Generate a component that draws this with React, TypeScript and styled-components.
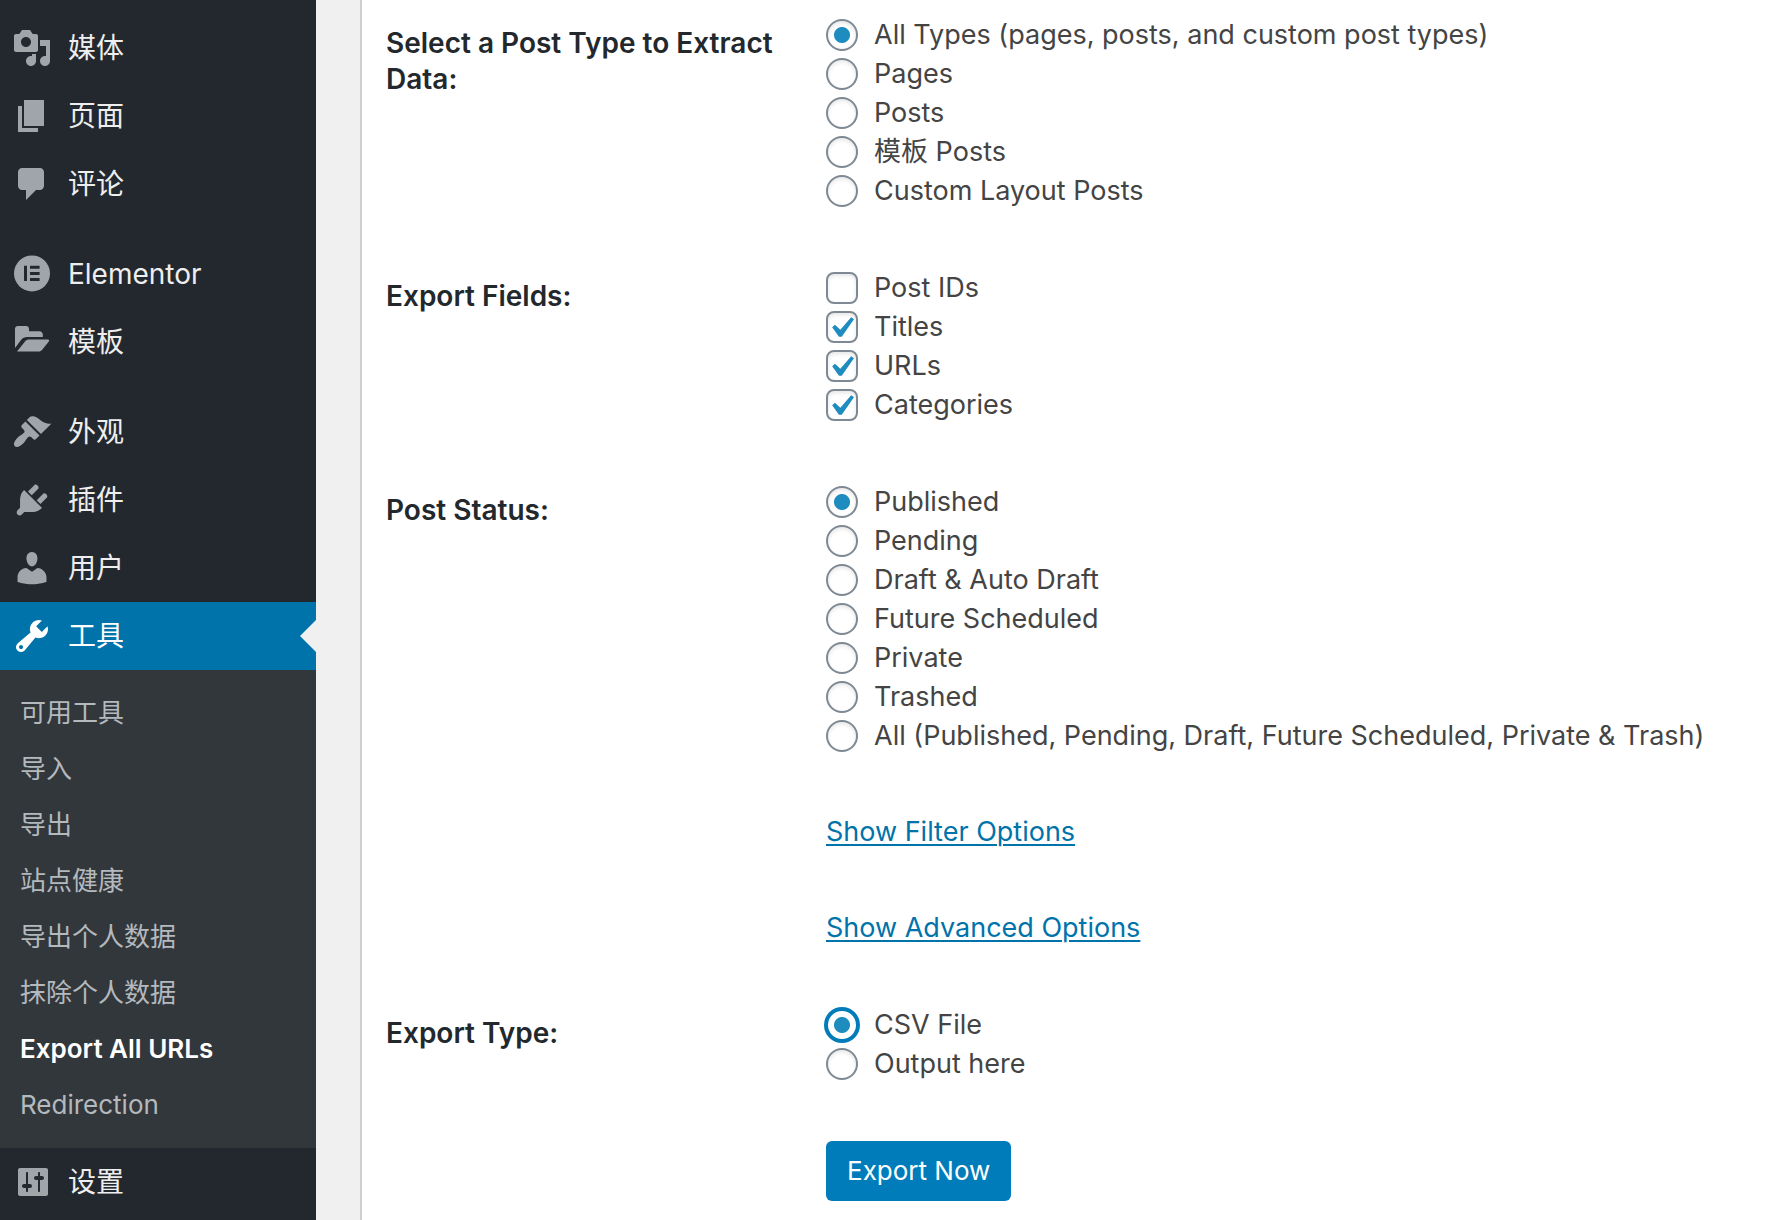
import React, { ReactNode, useState } from "react";
import styled, { createGlobalStyle, css } from "styled-components";

const GlobalStyle = createGlobalStyle`
  * { box-sizing: border-box; }
  html, body, #root { min-height: 100vh; }
  body {
    margin: 0;
    background: #f0f0f0;
    color: #444;
    font-family: Inter, "Noto Sans CJK SC", sans-serif;
    font-size: 27px;
    line-height: 36px;
  }
`;

const Page = styled.div`
  display: flex;
  min-height: 100vh;
`;

const Sidebar = styled.nav`
  flex: none;
  width: 316px;
  padding-top: 14px;
  background: #23282e;
`;

const MenuList = styled.ul`
  margin: 0;
  padding: 0;
  list-style: none;
`;

const MenuItem = styled.li<{ $spaced?: boolean }>`
  margin-top: ${(p) => (p.$spaced ? "22px" : "0")};
`;

const MenuLink = styled.a<{ $current?: boolean }>`
  position: relative;
  display: flex;
  align-items: center;
  gap: 16px;
  height: 68px;
  padding-left: 12px;
  color: #eee;
  font-size: 28px;
  text-decoration: none;

  svg {
    flex: none;
    width: 40px;
    height: 40px;
    fill: #a0a5aa;
  }

  ${(p) =>
    p.$current &&
    css`
      background: #0073aa;
      color: #fff;

      svg {
        fill: #fff;
      }

      &::after {
        content: "";
        position: absolute;
        top: 50%;
        right: 0;
        margin-top: -16px;
        border: 16px solid transparent;
        border-left-width: 0;
        border-right-color: #f0f0f0;
      }
    `}
`;

const Submenu = styled.ul`
  margin: 0;
  padding: 15px 0;
  list-style: none;
  background: #32373c;
`;

const SubmenuLink = styled.a<{ $current?: boolean }>`
  display: flex;
  align-items: center;
  height: 56px;
  padding-left: 20px;
  color: ${(p) => (p.$current ? "#fff" : "#b4b9be")};
  font-size: 26px;
  font-weight: ${(p) => (p.$current ? 600 : 400)};
  text-decoration: none;
`;

const Main = styled.main`
  flex: 1;
  min-width: 0;
  margin-left: 44px;
  padding: 15px 24px 17px;
  border-left: 2px solid #ccd0d4;
  background: #fff;
`;

const Form = styled.form`
  display: flex;
  flex-direction: column;
  gap: 58px;
`;

const Row = styled.div`
  display: grid;
  grid-template-columns: 400px 1fr;
  column-gap: 40px;
  align-items: start;
`;

const RowTitle = styled.h2`
  margin: 0;
  padding-top: 10px;
  color: #23282d;
  font-size: 28px;
  font-weight: 600;
  line-height: 36px;
`;

const RowBody = styled.div`
  grid-column: 2;
`;

const Option = styled.label`
  display: flex;
  align-items: center;
  gap: 16px;
  height: 39px;
  white-space: nowrap;
`;

const Control = styled.input`
  appearance: none;
  flex: none;
  width: 32px;
  height: 32px;
  margin: 0;
  border: 2px solid #7e8993;
  background-color: #fff;
  background-repeat: no-repeat;
  box-shadow: inset 0 2px 4px rgba(0, 0, 0, 0.1);
  outline: none;
`;

const Radio = styled(Control).attrs({ type: "radio" })<{ $active?: boolean }>`
  border-radius: 50%;

  &:checked {
    background-image: radial-gradient(circle, #1e8cbe 7.5px, transparent 8.5px);
  }

  ${(p) =>
    p.$active &&
    css`
      border-color: #007cba;
      box-shadow: 0 0 0 2px #007cba;
    `}
`;

const checkMark =
  "data:image/svg+xml,%3Csvg xmlns='http://www.w3.org/2000/svg' viewBox='0 0 20 20'%3E%3Cpath d='M14.83 4.89l1.34.94-5.81 8.38H9.02L5.78 9.67l1.34-1.25 2.57 2.4z' fill='%231e8cbe'/%3E%3C/svg%3E";

const Checkbox = styled(Control).attrs({ type: "checkbox" })`
  border-radius: 8px;

  &:checked {
    background-image: url("${checkMark}");
    background-position: -8px -6px;
    background-size: 42px 42px;
  }
`;

const ToggleLink = styled.a`
  display: inline-block;
  color: #0073aa;
  line-height: 38px;
  vertical-align: top;
  text-decoration-thickness: 2px;
  text-underline-offset: 3px;
`;

const SubmitButton = styled.button`
  display: block;
  height: 60px;
  padding: 0 21px;
  border: 0;
  border-radius: 6px;
  background: #007cba;
  color: #fff;
  font: inherit;
  font-size: 26px;
`;

const icons: Record<string, ReactNode> = {
  media: (
    <path d="M13 11V4c0-.55-.45-1-1-1h-1.67L9 1H5L3.67 3H2c-.55 0-1 .45-1 1v7c0 .55.45 1 1 1h10c.55 0 1-.45 1-1zM7 4.5c1.38 0 2.5 1.12 2.5 2.5S8.38 9.5 7 9.5 4.5 8.38 4.5 7 5.62 4.5 7 4.5zM14 6h5v10.5c0 1.38-1.12 2.5-2.5 2.5S14 17.88 14 16.5s1.12-2.5 2.5-2.5c.17 0 .34.02.5.05V9h-3V6zm-4 8.05V13h2v3.5c0 1.38-1.12 2.5-2.5 2.5S7 17.88 7 16.5 8.12 14 9.5 14c.17 0 .34.02.5.05z" />
  ),
  page: <path d="M6 15V2h10v13H6zm-1 1h8v2H3V5h2v11z" />,
  comments: (
    <path d="M5 2h9c1.1 0 2 .9 2 2v7c0 1.1-.9 2-2 2h-2l-5 5v-5H5c-1.1 0-2-.9-2-2V4c0-1.1.9-2 2-2z" />
  ),
  elementor: (
    <path
      fillRule="evenodd"
      d="M10 .7a9 9 0 1 1 0 18 9 9 0 0 1 0-18zM6 5.9v7.6h1.5V5.9zM9 5.9v1.5h4.8V5.9zM9 9v1.5h4.8V9zM9 12v1.5h4.8V12z"
    />
  ),
  folder: (
    <path d="M1.5 13V3.4C1.5 2.6 2.1 2 2.9 2h4.2c.8 0 1.4.6 1.4 1.4v1.2h5.2c1 0 1.7.7 1.7 1.7v1.2H7.6c-1.4 0-2.2.5-3 1.4zM2.5 14.7l4-4.9c.6-.7 1.2-1 2.2-1h9.3c.6 0 .8.4.4.9l-3.3 4.2c-.5.6-1 .9-1.8.9H2.8c-.3 0-.4 0-.3-.1z" />
  ),
  appearance: (
    <path d="M14.48 11.06L7.41 3.99l1.5-1.5c.5-.56 2.3-.47 3.51.32 1.21.8 1.43 1.28 2.91 2.1 1.18.64 2.45 1.26 4.45.85zm-.71.71L6.7 4.7 4.93 6.47c-.39.39-.39 1.02 0 1.41l1.06 1.06c.39.39.39 1.03 0 1.42-.6.6-1.43 1.11-2.21 1.69-.35.26-.7.53-1.01.84C1.43 14.23.4 16.08 1.4 17.07c.99 1 2.84-.03 4.18-1.36.31-.31.58-.66.85-1.02.57-.78 1.08-1.61 1.69-2.21.39-.39 1.02-.39 1.41 0l1.06 1.06c.39.39 1.02.39 1.41 0z" />
  ),
  plugins: (
    <path d="M13.11 4.36L9.87 7.6 8 5.73l3.24-3.24c.35-.34 1.05-.2 1.56.32.52.51.66 1.21.31 1.55zm-8 1.77l.91-1.12 9.01 9.01-1.19.84c-.71.71-2.63 1.16-3.82 1.16H6.14L4.9 17.26c-.59.59-1.54.59-2.12 0-.59-.58-.59-1.53 0-2.12l1.24-1.24v-3.88c0-1.13.4-3.19 1.09-3.89zm7.26 3.97l3.24-3.24c.34-.35 1.04-.21 1.55.31.52.51.66 1.21.31 1.55l-3.24 3.25z" />
  ),
  users: (
    <path d="M10 9.25c-2.27 0-2.73-3.44-2.73-3.44C7 4.02 7.82 2 9.97 2c2.16 0 2.98 2.02 2.71 3.81 0 0-.41 3.44-2.68 3.44zm0 2.57L12.72 10c2.39 0 4.52 2.33 4.52 4.53v2.49s-3.65 1.13-7.24 1.13c-3.65 0-7.24-1.13-7.24-1.13v-2.49c0-2.25 1.94-4.48 4.47-4.48z" />
  ),
  tools: (
    <path d="M16.68 9.77c-1.34 1.34-3.3 1.67-4.95.99l-5.41 6.52c-.99.99-2.59.99-3.58 0s-.99-2.59 0-3.57l6.52-5.42c-.68-1.65-.35-3.61.99-4.95 1.28-1.28 3.12-1.62 4.72-1.06l-2.89 2.89 2.82 2.82 2.86-2.87c.53 1.58.18 3.39-1.08 4.65zM3.81 16.21c.4.39 1.04.39 1.43 0 .4-.4.4-1.04 0-1.43-.39-.4-1.03-.4-1.43 0-.39.39-.39 1.03 0 1.43z" />
  ),
  settings: (
    <path d="M18 16V4c0-.55-.45-1-1-1H4c-.55 0-1 .45-1 1v12c0 .55.45 1 1 1h13c.55 0 1-.45 1-1zM8 11h1c.55 0 1 .45 1 1s-.45 1-1 1H8v1.5c0 .28-.22.5-.5.5s-.5-.22-.5-.5V13H6c-.55 0-1-.45-1-1s.45-1 1-1h1V5.5c0-.28.22-.5.5-.5s.5.22.5.5V11zm5-2h-1c-.55 0-1-.45-1-1s.45-1 1-1h1V5.5c0-.28.22-.5.5-.5s.5.22.5.5V7h1c.55 0 1 .45 1 1s-.45 1-1 1h-1v5.5c0 .28-.22.5-.5.5s-.5-.22-.5-.5V9z" />
  ),
};

type SubItem = { label: string; current?: boolean };
type Item = {
  icon: string;
  label: string;
  spaced?: boolean;
  current?: boolean;
  children?: SubItem[];
};

const menu: Item[] = [
  { icon: "media", label: "媒体" },
  { icon: "page", label: "页面" },
  { icon: "comments", label: "评论" },
  { icon: "elementor", label: "Elementor", spaced: true },
  { icon: "folder", label: "模板" },
  { icon: "appearance", label: "外观", spaced: true },
  { icon: "plugins", label: "插件" },
  { icon: "users", label: "用户" },
  {
    icon: "tools",
    label: "工具",
    current: true,
    children: [
      { label: "可用工具" },
      { label: "导入" },
      { label: "导出" },
      { label: "站点健康" },
      { label: "导出个人数据" },
      { label: "抹除个人数据" },
      { label: "Export All URLs", current: true },
      { label: "Redirection" },
    ],
  },
  { icon: "settings", label: "设置" },
];

const postTypes = [
  "All Types (pages, posts, and custom post types)",
  "Pages",
  "Posts",
  "模板 Posts",
  "Custom Layout Posts",
];

const statuses = [
  "Published",
  "Pending",
  "Draft & Auto Draft",
  "Future Scheduled",
  "Private",
  "Trashed",
  "All (Published, Pending, Draft, Future Scheduled, Private & Trash)",
];

const fields = ["Post IDs", "Titles", "URLs", "Categories"];

function FormRow({ id, title, children }: { id: string; title: string; children: ReactNode }) {
  return (
    <Row role="group" aria-labelledby={id}>
      <RowTitle id={id}>{title}</RowTitle>
      <RowBody>{children}</RowBody>
    </Row>
  );
}

function RadioList({ name, options, active }: { name: string; options: string[]; active?: boolean }) {
  const [value, setValue] = useState(options[0]);
  return (
    <>
      {options.map((option) => (
        <Option key={option}>
          <Radio
            name={name}
            value={option}
            checked={value === option}
            $active={active && value === option}
            onChange={() => setValue(option)}
          />
          <span>{option}</span>
        </Option>
      ))}
    </>
  );
}

export default function App() {
  return (
    <>
      <GlobalStyle />
      <Page>
        <Sidebar>
          <MenuList>
            {menu.map((item) => (
              <MenuItem key={item.icon} $spaced={item.spaced}>
                <MenuLink href="#" $current={item.current}>
                  <svg viewBox="0 0 20 20" aria-hidden="true">
                    {icons[item.icon]}
                  </svg>
                  <span>{item.label}</span>
                </MenuLink>
                {item.children && (
                  <Submenu>
                    {item.children.map((sub) => (
                      <li key={sub.label}>
                        <SubmenuLink href="#" $current={sub.current}>
                          {sub.label}
                        </SubmenuLink>
                      </li>
                    ))}
                  </Submenu>
                )}
              </MenuItem>
            ))}
          </MenuList>
        </Sidebar>
        <Main>
          <Form onSubmit={(e) => e.preventDefault()}>
            <FormRow id="post-type" title="Select a Post Type to Extract Data:">
              <RadioList name="post-type" options={postTypes} />
            </FormRow>
            <FormRow id="fields" title="Export Fields:">
              {fields.map((field) => (
                <Option key={field}>
                  <Checkbox name="fields" value={field} defaultChecked={field !== "Post IDs"} />
                  <span>{field}</span>
                </Option>
              ))}
            </FormRow>
            <FormRow id="status" title="Post Status:">
              <RadioList name="status" options={statuses} />
            </FormRow>
            <Row>
              <RowBody>
                <ToggleLink href="#">Show Filter Options</ToggleLink>
              </RowBody>
            </Row>
            <Row>
              <RowBody>
                <ToggleLink href="#">Show Advanced Options</ToggleLink>
              </RowBody>
            </Row>
            <FormRow id="export-type" title="Export Type:">
              <RadioList name="export-type" options={["CSV File", "Output here"]} active />
            </FormRow>
            <Row>
              <RowBody>
                <SubmitButton type="submit">Export Now</SubmitButton>
              </RowBody>
            </Row>
          </Form>
        </Main>
      </Page>
    </>
  );
}
